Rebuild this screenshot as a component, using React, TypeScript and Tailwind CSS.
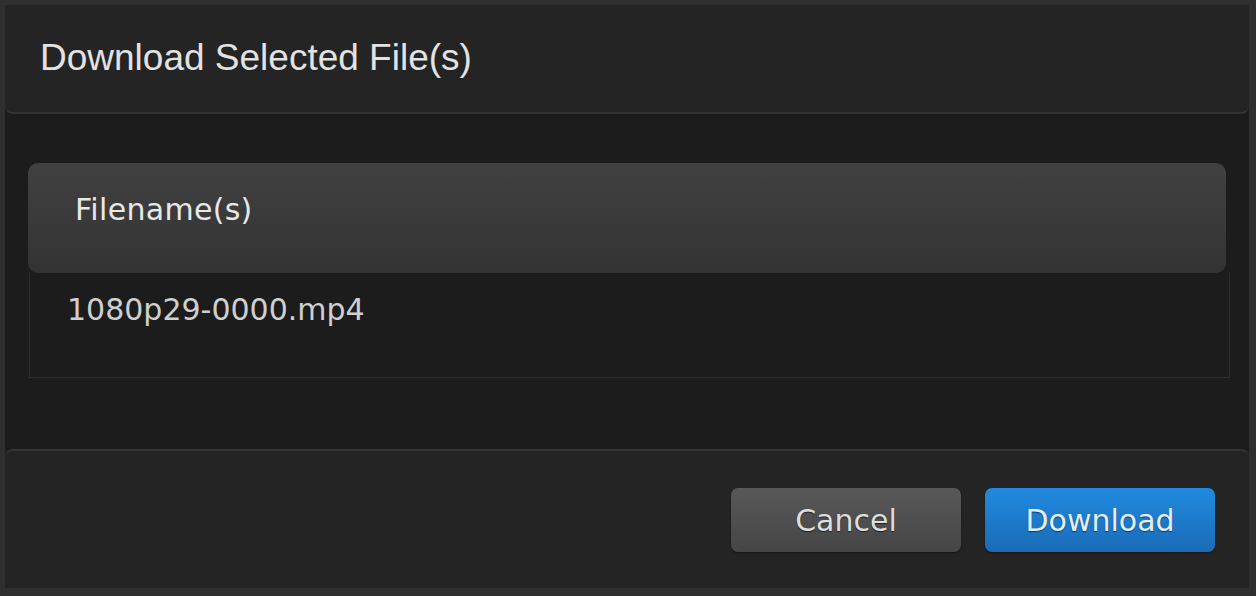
import React from "react";

export default function App() {
  return (
    <div className="w-[1256px] h-[596px] bg-[#2f2f2f] pt-[5px] pl-[5px] pr-[7px] pb-[8px]">
      <div className="flex flex-col h-full bg-[#1c1c1c]">
        <div className="h-[109px] shrink-0 bg-[#242424] border-b-[2px] border-[#333333] rounded-b-[8px] pl-[35px] pb-[3px] flex items-center">
          <h1 className="text-[37px] leading-none text-[#e2e2e2] font-['Liberation_Sans',Arial,sans-serif]">
            Download Selected File(s)
          </h1>
        </div>
        <div className="flex-1 pl-[23px] pr-[23px] pt-[49px] font-['DejaVu_Sans',Verdana,sans-serif]">
          <div className="h-[110px] rounded-[10px] bg-gradient-to-b from-[#414141] to-[#333333] pl-[47px] pt-[29px]">
            <div className="text-[30px] leading-[36px] text-[#e8e8e8] tracking-[0.3px]">Filename(s)</div>
          </div>
          <div className="ml-[1px] w-[1201px] h-[105px] border-l border-r border-b border-[#2c2c2c] pl-[37px] pt-[19px]">
            <div className="text-[30px] leading-[36px] text-[#cfcfcf]">1080p29-0000.mp4</div>
          </div>
        </div>
        <div className="h-[139px] shrink-0 bg-[#242424] border-t-[2px] border-[#333333] rounded-t-[8px] flex items-center justify-end pr-[34px] gap-[24px] font-['DejaVu_Sans',Verdana,sans-serif]">
          <button className="w-[230px] h-[64px] rounded-[7px] bg-gradient-to-b from-[#585858] to-[#464646] text-[30px] pt-[2px] text-[#dedede] [text-shadow:0_1px_1px_rgba(0,0,0,0.6)] shadow-[0_1px_2px_rgba(0,0,0,0.5)]">
            Cancel
          </button>
          <button className="w-[230px] h-[64px] rounded-[7px] bg-gradient-to-b from-[#208ae0] to-[#1a6cb6] text-[30px] pt-[2px] text-[#e6eef5] [text-shadow:0_1px_1px_rgba(0,0,0,0.5)] shadow-[0_1px_2px_rgba(0,0,0,0.5)]">
            Download
          </button>
        </div>
      </div>
    </div>
  );
}
